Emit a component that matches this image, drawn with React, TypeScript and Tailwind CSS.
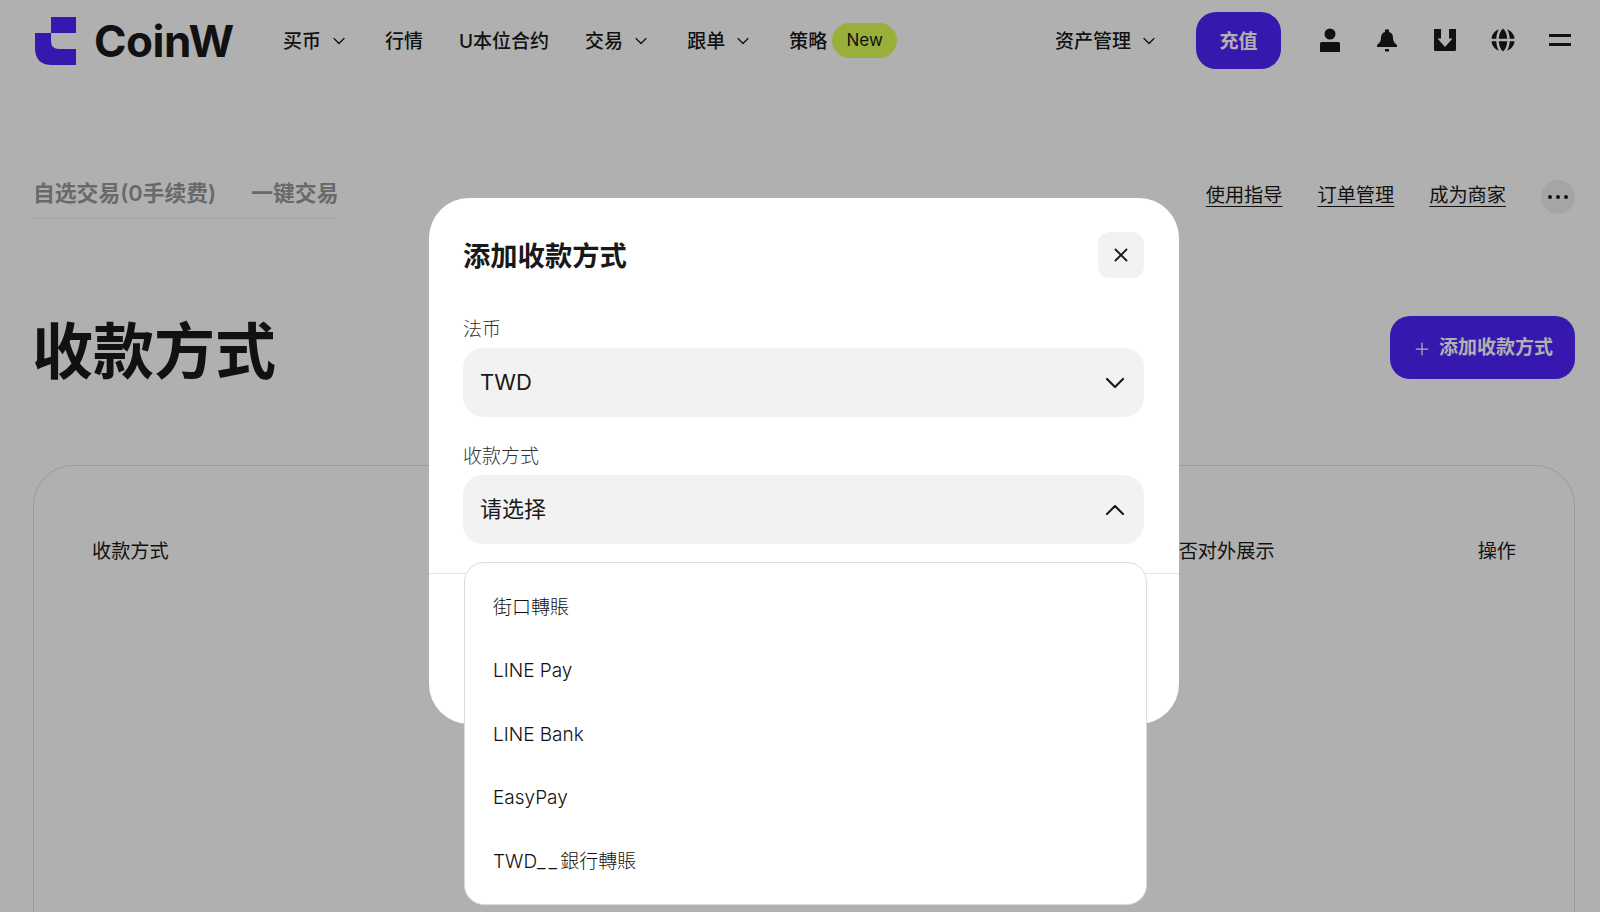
import { ChevronDown, ChevronUp, Plus, X } from "lucide-react";

const FONT = "[font-family:Inter,'Noto_Sans_CJK_SC',sans-serif]";

function Logo() {
  return (
    <svg width="42" height="50" viewBox="35 16 42 50" className="shrink-0 mr-[17px] mt-[2px]">
      <rect x="51" y="17" width="25" height="16" fill="#4f23fc" />
      <path d="M35 33H51V41Q51 49 59 49H76V65H52Q35 65 35 48Z" fill="#4f23fc" />
    </svg>
  );
}

function NavItem({ label, caret }: { label: string; caret?: boolean }) {
  return (
    <div className="flex items-center text-[19px] font-medium">
      <span className="pt-[5px]">{label}</span>
      {caret && <ChevronDown className="size-[20px] ml-[8px] mt-[2px]" strokeWidth={1.5} />}
    </div>
  );
}

function UserIcon() {
  return (
    <svg width="20" height="24" viewBox="0 0 20 24" fill="#191919">
      <circle cx="10" cy="6" r="5.5" />
      <path d="M0 15.500a1.500 1.500 0 0 1 1.500-1.500h17a1.500 1.500 0 0 1 1.500 1.500V24H0z" />
    </svg>
  );
}

function BellIcon() {
  return (
    <svg width="20" height="23" viewBox="0 0 20 23" fill="#191919">
      <path d="M8 3V.5h4V3c3 .8 4 3 4 6 0 3 1.500 5 4 7v2H0v-2c2.500-2 4-4 4-7 0-3 1-5.200 4-6z" />
      <rect x="8" y="20" width="4" height="2.500" />
    </svg>
  );
}

function DownloadIcon() {
  return (
    <svg width="22" height="22" viewBox="0 0 22 22">
      <path
        d="M0 0h7v9.500H3.500L11 18l7.500-8.500H15V0h7v20.500a1.500 1.500 0 0 1-1.500 1.500h-19A1.500 1.500 0 0 1 0 20.500z"
        fill="#191919"
      />
    </svg>
  );
}

function GlobeIcon() {
  return (
    <svg width="24" height="24" viewBox="0 0 24 24" fill="#191919">
      <path d="M12 .5c2.800 2.500 4 6 4.200 10.200H7.800C8 6.500 9.200 3 12 .5z" />
      <path d="M12 23.500c-2.800-2.500-4-6-4.200-10.200h8.400c-.2 4.200-1.400 7.700-4.200 10.200z" />
      <path d="M8 1.200C3.800 2.700.9 6.300.5 10.700h4.800C5.500 7 6.300 3.800 8 1.200z" />
      <path d="M16 1.200c4.200 1.500 7.100 5.100 7.500 9.500h-4.800C18.500 7 17.700 3.800 16 1.200z" />
      <path d="M8 22.800C3.800 21.300.9 17.700.5 13.300h4.800c.2 3.700 1 6.900 2.700 9.500z" />
      <path d="M16 22.800c4.200-1.500 7.100-5.100 7.500-9.500h-4.800c-.2 3.700-1 6.900-2.700 9.500z" />
    </svg>
  );
}

function Header() {
  return (
    <header className="h-[80px] pl-[35px] pr-[11px] flex items-center text-[#191919]">
      <Logo />
      <span className="text-[44px] font-bold tracking-[-0.5px] leading-none w-[189px] font-['Inter'] mt-[2px]">CoinW</span>
      <nav className="flex items-center gap-[36px]">
        <NavItem label="买币" caret />
        <NavItem label="行情" />
        <NavItem label="U本位合约" />
        <NavItem label="交易" caret />
        <NavItem label="跟单" caret />
        <div className="flex items-center text-[19px] font-medium">
          <span className="pt-[5px]">策略</span>
          <span className="ml-[5px] bg-[#dcff54] rounded-full h-[35px] w-[65px] flex items-center justify-center font-normal text-[17px] pt-[1px]">
            New
          </span>
        </div>
      </nav>
      <div className="ml-auto flex items-center">
        <NavItem label="资产管理" caret />
        <button className="ml-[37px] w-[85px] h-[57px] rounded-[20px] bg-[#4f23fc] text-white text-[19px] font-semibold pt-[5px]">
          充值
        </button>
        <div className="ml-[20px] grid grid-cols-5 w-[288px] justify-items-center items-center">
          <UserIcon />
          <BellIcon />
          <DownloadIcon />
          <GlobeIcon />
          <div className="flex flex-col gap-[6px] w-[22px]">
            <div className="h-[3px] bg-[#191919]" />
            <div className="h-[3px] bg-[#191919]" />
          </div>
        </div>
      </div>
    </header>
  );
}

function PageBody() {
  return (
    <main className="px-[25px] pl-[33px] text-[#191919]">
      <div className="mt-[100px] flex items-start justify-between">
        <div className="flex gap-[35px] border-b border-[#f0f0f0] pb-[12px] w-[305px] text-[21.8px] font-semibold text-[#989898] leading-[26px] whitespace-nowrap">
          <span>自选交易(0手续费)</span>
          <span>一键交易</span>
        </div>
        <div className="flex items-center gap-[35px] text-[19.2px]">
          <span className="underline underline-offset-[4px] mb-[4px]">使用指导</span>
          <span className="underline underline-offset-[4px] mb-[4px]">订单管理</span>
          <span className="underline underline-offset-[4px] mb-[4px]">成为商家</span>
          <div className="size-[34px] rounded-full bg-[#f0f0f0] flex items-center justify-center gap-[4px]">
            <i className="size-[4px] bg-[#191919] rounded-full" />
            <i className="size-[4px] bg-[#191919] rounded-full" />
            <i className="size-[4px] bg-[#191919] rounded-full" />
          </div>
        </div>
      </div>
      <div className="mt-[97px] flex items-start justify-between">
        <h1 className="text-[61px] font-bold leading-[64px] mt-[4px] -ml-[1px]">收款方式</h1>
        <button className="w-[185px] h-[63px] rounded-[20px] bg-[#4f23fc] text-white text-[19px] font-semibold flex items-center justify-center gap-[7px] pt-[2px]">
          <Plus className="size-[20px]" strokeWidth={1.5} />
          <span>添加收款方式</span>
        </button>
      </div>
      <div className="mt-[81px] h-[560px] border border-[#dedede] rounded-[40px] pl-[58px] pr-[58px] pt-[73px] flex justify-between text-[19.2px] leading-[25px] font-normal">
        <span>收款方式</span>
        <div className="flex gap-[203px]">
          <span>是否对外展示</span>
          <span>操作</span>
        </div>
      </div>
    </main>
  );
}

function Select({ label, value, open }: { label: string; value: string; open?: boolean }) {
  return (
    <div>
      <div className="text-[19px] leading-[24px] text-[#333] font-light">{label}</div>
      <div className="mt-[6px] h-[69px] bg-[#f2f2f2] rounded-[20px] pl-[17px] pr-[13px] flex items-center justify-between text-[22px]">
        <span>{value}</span>
        {open ? <ChevronUp className="size-[32px]" strokeWidth={1.6} /> : <ChevronDown className="size-[32px]" strokeWidth={1.6} />}
      </div>
    </div>
  );
}

function Modal() {
  return (
    <div className="absolute left-[429px] top-[198px] w-[750px] h-[526px] bg-white rounded-[40px] text-[#191919] pt-[34px]">
      <div className="pl-[34px] pr-[35px] flex items-start justify-between">
        <h2 className="text-[27.3px] font-bold leading-[46px] pt-[2px]">添加收款方式</h2>
        <div className="size-[46px] rounded-[12px] bg-[#f2f2f2] flex items-center justify-center">
          <X className="size-[22px]" strokeWidth={2} />
        </div>
      </div>
      <div className="pl-[34px] pr-[35px] mt-[38px] flex flex-col gap-[28px]">
        <Select label="法币" value="TWD" />
        <Select label="收款方式" value="请选择" open />
      </div>
      <div className="mt-[29px] border-t border-[#e5e5e5]" />
    </div>
  );
}

function Dropdown() {
  const items = ["街口轉賬", "LINE Pay", "LINE Bank", "EasyPay"];
  return (
    <div className="absolute left-[464px] top-[562px] w-[683px] h-[343px] bg-white border border-[#dcdcdc] rounded-[20px] py-[13px] pl-[28px] text-[19px] font-light text-[#111]">
      {items.map((item) => (
        <div key={item} className="h-[63.500px] flex items-center">
          {item}
        </div>
      ))}
      <div className="h-[63.500px] flex items-center">
        TWD<span className="tracking-[3px]">__</span>銀行轉賬
      </div>
    </div>
  );
}

export default function App() {
  return (
    <div className={`relative h-[912px] overflow-hidden bg-white ${FONT}`}>
      <Header />
      <PageBody />
      <div className="absolute inset-0 bg-black/[0.31]" />
      <Modal />
      <Dropdown />
    </div>
  );
}
